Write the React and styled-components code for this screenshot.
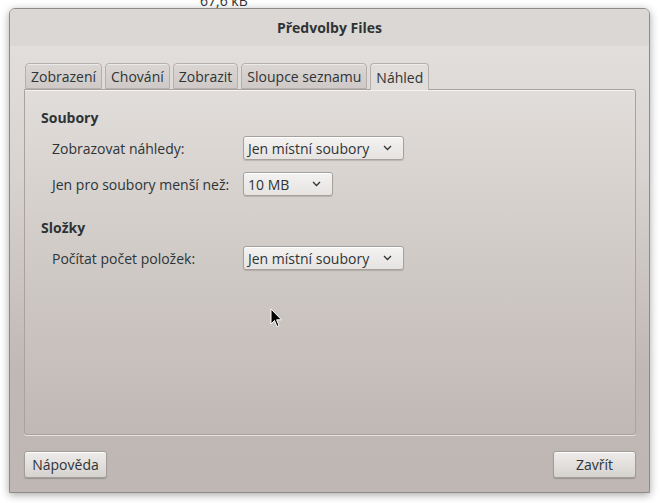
import styled, { createGlobalStyle } from "styled-components";

const GlobalStyle = createGlobalStyle`
  html, body {
    margin: 0;
    padding: 0;
    background: #ffffff;
    font-family: "Open Sans", "DejaVu Sans", sans-serif;
    color: #2e3436;
  }
`;

const Screen = styled.div`
  width: 660px;
  height: 503px;
  position: relative;
  overflow: hidden;
  background: #ffffff;
`;

const BehindText = styled.div`
  position: absolute;
  left: 200px;
  top: -7px;
  font-size: 14px;
  line-height: 16px;
  color: #2e3436;
`;

const Dialog = styled.div`
  position: absolute;
  left: 9px;
  top: 8px;
  width: 641px;
  height: 485px;
  border: 1px solid #8f8a87;
  border-radius: 6px 6px 0 0;
  box-sizing: border-box;
  display: flex;
  flex-direction: column;
  background: linear-gradient(#e4e1de 0%, #d8d3d0 35%, #c0b8b5 75%, #bfb7b4 100%);
  box-shadow: 0 2px 8px rgba(0, 0, 0, 0.35);
`;

const TitleBar = styled.div`
  height: 37px;
  flex: none;
  display: flex;
  align-items: center;
  justify-content: center;
  background: #dbd7d4;
  border-radius: 5px 5px 0 0;
  font-weight: 700;
  font-size: 14px;
  color: #2e3436;
`;

const Body = styled.div`
  flex: 1;
  display: flex;
  flex-direction: column;
  padding: 17px 13px 14px 14px;
`;

const Tabs = styled.div`
  display: flex;
  gap: 3px;
  padding-left: 1px;
  height: 26px;
  position: relative;
  z-index: 1;
`;

const Tab = styled.div`
  box-sizing: border-box;
  height: ${(p) => (p.$active ? "27px" : "26px")};
  padding: 0 5px;
  display: flex;
  align-items: center;
  font-size: 14px;
  color: #2e3436;
  border: 1px solid #b6b0ad;
  border-bottom: ${(p) => (p.$active ? "none" : "1px solid #b6b0ad")};
  border-radius: 4px 4px 0 0;
  background: ${(p) => (p.$active ? "#e1ddda" : "linear-gradient(#dad6d3, #cfcac7)")};
  box-shadow: inset 0 1px 0 rgba(255, 255, 255, 0.5);
`;

const Panel = styled.div`
  flex: 1;
  box-sizing: border-box;
  border: 1px solid #a9a29f;
  border-radius: 0 3px 3px 3px;
  box-shadow: inset 0 1px 0 #f5f3f2, 0 1px 0 rgba(255, 255, 255, 0.6);
  background: linear-gradient(#e1ddda 0%, #d3ceca 40%, #c0b8b5 100%);
  padding: 18px 16px 0 16px;
  display: flex;
  flex-direction: column;
`;

const SectionTitle = styled.div`
  font-weight: 700;
  font-size: 14px;
  height: 20px;
  line-height: 20px;
  color: #2e3436;
  margin-bottom: 8px;
  margin-top: ${(p) => p.$top || 0}px;
`;

const Row = styled.div`
  display: grid;
  grid-template-columns: 191px auto;
  align-items: center;
  padding-left: 11px;
  margin-bottom: 12px;
`;

const Label = styled.div`
  font-size: 14px;
  color: #2e3436;
`;

const Combo = styled.div`
  box-sizing: border-box;
  width: ${(p) => p.$w}px;
  height: 24px;
  border: 1px solid #a7a19e;
  border-radius: 3px;
  background: linear-gradient(#f4f3f2, #e6e3e1);
  box-shadow: 0 1px 1px rgba(0, 0, 0, 0.15), inset 0 1px 0 #ffffff;
  display: flex;
  align-items: center;
  justify-content: space-between;
  padding: 0 11px 0 4px;
  font-size: 14px;
  color: #2e3436;
`;

const Footer = styled.div`
  display: flex;
  justify-content: space-between;
  margin-top: 16px;
`;

const Button = styled.div`
  box-sizing: border-box;
  width: ${(p) => p.$w}px;
  height: 27px;
  border: 1px solid #a39d9a;
  border-radius: 3px;
  background: linear-gradient(#eeecea, #d6d2cf);
  box-shadow: 0 1px 1px rgba(0, 0, 0, 0.2), inset 0 1px 0 #ffffff;
  display: flex;
  align-items: center;
  justify-content: center;
  font-size: 14px;
  color: #2e3436;
`;

const Cursor = styled.svg`
  position: absolute;
  left: 270px;
  top: 308px;
`;

function Chevron() {
  return (
    <svg width="9" height="6" viewBox="0 0 9 6">
      <path d="M1 1 L4.5 4.5 L8 1" fill="none" stroke="#2e3436" strokeWidth="1.3" />
    </svg>
  );
}

function Select({ width, value }) {
  return (
    <Combo $w={width}>
      <span>{value}</span>
      <Chevron />
    </Combo>
  );
}

export default function App() {
  return (
    <Screen>
      <GlobalStyle />
      <BehindText>67,6 kB</BehindText>
      <Dialog>
        <TitleBar>Předvolby Files</TitleBar>
        <Body>
          <Tabs>
            <Tab>Zobrazení</Tab>
            <Tab>Chování</Tab>
            <Tab>Zobrazit</Tab>
            <Tab>Sloupce seznamu</Tab>
            <Tab $active>Náhled</Tab>
          </Tabs>
          <Panel>
            <SectionTitle>Soubory</SectionTitle>
            <Row>
              <Label>Zobrazovat náhledy:</Label>
              <Select width={161} value="Jen místní soubory" />
            </Row>
            <Row>
              <Label>Jen pro soubory menší než:</Label>
              <Select width={90} value="10 MB" />
            </Row>
            <SectionTitle $top={10}>Složky</SectionTitle>
            <Row>
              <Label>Počítat počet položek:</Label>
              <Select width={161} value="Jen místní soubory" />
            </Row>
          </Panel>
          <Footer>
            <Button $w={83}>Nápověda</Button>
            <Button $w={83}>Zavřít</Button>
          </Footer>
        </Body>
      </Dialog>
      <Cursor width="14" height="22" viewBox="0 0 14 22">
        <path d="M1 1 L1 16 L4.5 12.5 L7 18.5 L9 17.6 L6.6 11.8 L11.5 11.8 Z" fill="#000" stroke="#fff" strokeWidth="1" />
      </Cursor>
    </Screen>
  );
}
